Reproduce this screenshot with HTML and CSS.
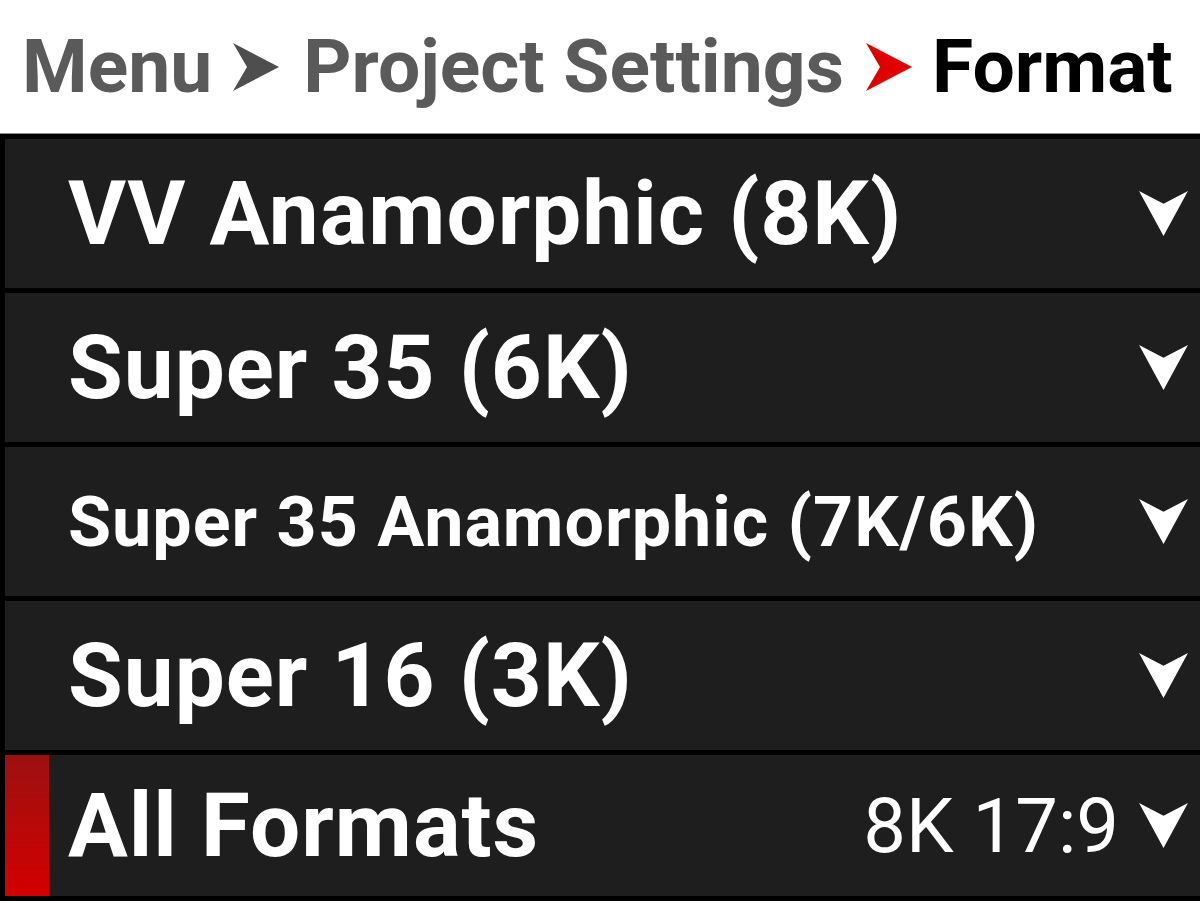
FILE: index.html
```html
<!DOCTYPE html>
<html lang="en">
  <head>
    <meta charset="utf-8" />
    <title>Format</title>
    <link rel="stylesheet" href="styles.css">
  </head>
  <body>
    <div class="crumbs">
      <span class="crumb">Menu</span>
      <svg class="sep" viewBox="0 0 46 48"><path d="M0 0 L46 24 L0 48 L14 24 Z" /></svg>
      <span class="crumb">Project Settings</span>
      <svg class="sep red" viewBox="0 0 46 48"><path d="M0 0 L46 24 L0 48 L14 24 Z" /></svg>
      <span class="crumb current">Format</span>
    </div>

    <div class="list">
      <div class="row">
        <span class="label">VV Anamorphic (8K)</span>
        <svg class="chev" viewBox="0 0 50 46"><path d="M0 0 L25 13 L50 0 L25 46 Z" /></svg>
      </div>
      <div class="row">
        <span class="label">Super 35 (6K)</span>
        <svg class="chev" viewBox="0 0 50 46"><path d="M0 0 L25 13 L50 0 L25 46 Z" /></svg>
      </div>
      <div class="row">
        <span class="label small">Super 35 Anamorphic (7K/6K)</span>
        <svg class="chev" viewBox="0 0 50 46"><path d="M0 0 L25 13 L50 0 L25 46 Z" /></svg>
      </div>
      <div class="row">
        <span class="label">Super 16 (3K)</span>
        <svg class="chev" viewBox="0 0 50 46"><path d="M0 0 L25 13 L50 0 L25 46 Z" /></svg>
      </div>
      <div class="row last selected">
        <div class="marker"></div>
        <span class="label">All Formats</span>
        <span class="value">8K 17:9</span>
        <svg class="chev" viewBox="0 0 50 46"><path d="M0 0 L25 13 L50 0 L25 46 Z" /></svg>
      </div>
    </div>
  </body>
</html>
```

FILE: styles.css
```css
body {
  margin: 0;
  background: #ffffff;
  font-family: Roboto, "Liberation Sans", sans-serif;
}

.crumbs {
  height: 134px;
  display: flex;
  flex-direction: row;
  align-items: center;
  padding-left: 22px;
  box-sizing: border-box;
  border-bottom: 1px solid #8c8c8c;
}

.crumb {
  font-size: 75px;
  font-weight: 700;
  color: #5a5a5a;
  line-height: 1;
}

.crumb.current {
  color: #000000;
}

.sep {
  width: 46px;
  height: 48px;
  margin: 0 24px 0 21px;
  fill: #4e4e4e;
}

.sep.red {
  fill: #e00000;
  margin: 0 20px 0 22px;
}

.list {
  background: #000000;
  padding: 5px 0 5px 5px;
  display: flex;
  flex-direction: column;
  gap: 5px;
}

.row {
  height: 149px;
  background: #1e1e1e;
  display: flex;
  flex-direction: row;
  align-items: center;
  padding: 0 12px 0 63px;
  box-sizing: border-box;
  color: #ffffff;
}

.row.last {
  height: 141px;
  padding-left: 0;
}

.label {
  flex: 1;
  font-size: 89px;
  font-weight: 700;
  letter-spacing: 1px;
  line-height: 1;
  white-space: nowrap;
}

.label.small {
  font-size: 70px;
}

.marker {
  width: 44px;
  align-self: stretch;
  margin-right: 19px;
  background: linear-gradient(to bottom, #9c1010, #d40000);
}

.value {
  font-size: 76px;
  font-weight: 400;
  line-height: 1;
  margin-right: 20px;
}

.chev {
  width: 49px;
  height: 45px;
  fill: #ffffff;
}
```
